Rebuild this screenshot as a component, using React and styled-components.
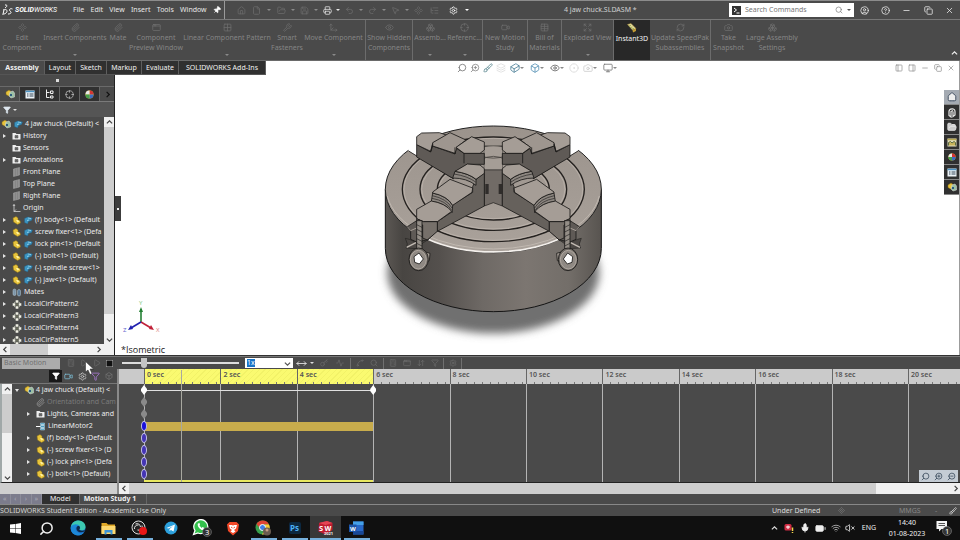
import React from "react"
import styled, { createGlobalStyle, css } from "styled-components"
import {
  Home, File, FolderOpen, Save, Printer, Undo2, Redo2, MousePointer2, Settings, ListTree, Search,
  CircleUser, CircleHelp, Minus, Copy, X, Pin, Component, Paperclip, AppWindow, Grid2x2, Wrench,
  Move3d, Eye, Boxes, Crosshair, Video, Table, Expand, RefreshCw, Camera, Layers, ZoomIn, ZoomOut,
  Brush, Box, Monitor, Calculator, Play, Filter, Mic, BatteryMedium, Wifi, VolumeX,
  PanelLeft, PanelRight, Key, Activity, Spline, MoveHorizontal, ArrowDownUp, Cuboid, CircleDot
} from "lucide-react"

const GlobalStyle = createGlobalStyle`
  * { box-sizing: border-box; }
  body {
    margin: 0;
    background: #4a4a4a;
    color: #e8e8e8;
    font-family: "Noto Sans", "Open Sans", sans-serif;
    font-size: 7px;
    line-height: 10px;
    overflow: hidden;
  }
  button, input, select {
    margin: 0;
    padding: 0;
    border: 0;
    background: none;
    color: inherit;
    font: inherit;
  }
  svg { display: block; flex: none; }
  ul { list-style: none; margin: 0; padding: 0; }
`

const Page = styled.div`
  display: flex;
  flex-direction: column;
  height: 100vh;
`

/* title bar */

const TitleBar = styled.header`
  display: flex;
  align-items: center;
  height: 20px;
  flex: none;
  border-top: 1px solid #8c8c8c;
  border-bottom: 1px solid #787878;
`

const Brand = styled.div`
  display: flex;
  align-items: center;
  gap: 2px;
  width: 70px;
  padding-left: 2px;
  font-family: Roboto, sans-serif;
  font-size: 7px;
  font-style: italic;
  color: #fff;
`

const Menu = styled.nav`
  display: flex;
  align-items: center;
  justify-content: space-between;
  width: 155px;
  height: 18px;
  padding: 0 3px;
  border-right: 1px solid #9a9a9a;
`

const QuickTools = styled.div`
  display: flex;
  align-items: center;
  width: 254px;
  padding-left: 10px;
`

const IconButton = styled.button`
  display: flex;
  align-items: center;
  justify-content: center;
  width: ${p => p.$w || 13}px;
  height: 12px;
  flex: none;
  color: ${p => p.$color || "#6c6c6c"};
  background: ${p => p.$bg || "none"};
`

const DocTitle = styled.h1`
  flex: 1;
  margin: 0;
  padding-left: 85px;
  font-size: 7px;
  font-weight: 400;
  color: #d0d0d0;
  white-space: nowrap;
`

const SearchBox = styled.label`
  display: flex;
  align-items: center;
  gap: 4px;
  width: 125px;
  height: 14px;
  padding: 0 3px;
  background: #fff;
  color: #777;
  & input { flex: 1; min-width: 0; }
  & input::placeholder { color: #777; opacity: 1; }
`

const WindowButtons = styled.div`
  display: flex;
  justify-content: space-around;
  width: 106px;
`

/* ribbon */

const Ribbon = styled.div`
  display: flex;
  height: 41px;
  flex: none;
  border-bottom: 1px solid #6a6a6a;
`

const RibbonButton = styled.button`
  display: flex;
  flex-direction: column;
  align-items: center;
  width: ${p => p.$w}px;
  flex: none;
  padding-top: 3px;
  line-height: 10px;
  color: #858585;
  white-space: nowrap;
  & svg { margin-bottom: 1px; color: #6e6e6e; }
  ${p => p.$sep && css`border-right: 1px solid #6c6c6c;`}
  ${p => p.$on && css`
    background: #282828;
    color: #f4f4f4;
  `}
`

const Caret = styled.i`
  width: 0;
  height: 0;
  border: 2px solid transparent;
  border-top-color: ${p => p.$color || "#8a8a8a"};
  border-bottom: 0;
`

const Collapse = styled.button`
  margin: auto 2px 3px auto;
  color: #eee;
`

/* work area */

const Work = styled.main`
  display: flex;
  flex-direction: column;
  flex: 1;
  min-height: 0;
  background: #fff;
  border-right: 1px solid #9c9c9c;
`

const TopRow = styled.div`
  display: flex;
  height: 14px;
  flex: none;
`

const Tab = styled.button`
  width: ${p => p.$w}px;
  background: ${p => (p.$on ? "#4a4a4a" : "#303030")};
  font-weight: ${p => (p.$on ? 700 : 400)};
  color: #f0f0f0;
  border-right: 1px solid #5e5e5e;
  border-bottom: 1px solid #555;
  white-space: nowrap;
`

const ViewTools = styled.div`
  display: flex;
  align-items: center;
  margin-left: 189px;
`

const ViewControls = styled.div`
  display: flex;
  align-items: center;
  margin-left: auto;
  padding-right: 2px;
`

const WorkRow = styled.div`
  display: flex;
  flex: 1;
  min-height: 0;
`

const Side = styled.aside`
  display: flex;
  flex-direction: column;
  width: 115px;
  flex: none;
  background: #4a4a4a;
  border-right: 1px solid #222;
`

const Grip = styled.div`
  display: flex;
  align-items: center;
  justify-content: center;
  height: 12px;
  border-bottom: 1px solid #6a6a6a;
  &::after {
    content: "";
    width: 3px;
    height: 3px;
    background: #ddd;
  }
`

const SideTabs = styled.div`
  display: flex;
  height: 15px;
  border-bottom: 1px solid #7a7a7a;
  & button {
    width: 20px;
    height: 14px;
    background: #303030;
    border-right: 1px solid #666;
  }
  & button:first-child { background: #4a4a4a; }
  & button:last-child { background: none; border: 0; width: 14px; }
`

const FilterRow = styled.div`
  display: flex;
  align-items: center;
  gap: 2px;
  height: 15px;
  padding-left: 3px;
  background: #555;
`

const TreeArea = styled.div`
  display: flex;
  flex: 1;
  min-height: 0;
`

const Tree = styled.ul`
  flex: 1;
  min-width: 0;
  padding-top: 1px;
  overflow: hidden;
`

const MotionRows = styled(Tree)`
  padding-top: 0;
`

const TreeRow = styled.li`
  display: flex;
  align-items: center;
  gap: 2px;
  height: 12px;
  padding-left: ${p => p.$indent || 0}px;
  color: ${p => (p.$dim ? "#7a7a7a" : "#ececec")};
  white-space: nowrap;
`

const Twist = styled.i`
  width: 10px;
  flex: none;
  &::before {
    content: "";
    display: ${p => (p.$show ? "block" : "none")};
    width: 0;
    margin-left: 3px;
    border: 2px solid transparent;
    border-left: 3px solid #e4e4e4;
    border-right: 0;
  }
  ${p => p.$open && css`&::before { border: 2px solid transparent; border-top: 3px solid #e4e4e4; border-bottom: 0; }`}
`

const Bar = styled.div`
  display: flex;
  flex-direction: ${p => (p.$vertical ? "column" : "row")};
  ${p => (p.$vertical ? "width: 10px;" : "height: 11px;")}
  flex: none;
  background: #f0f0f0;
  color: #444;
`

const BarButton = styled.button`
  display: flex;
  align-items: center;
  justify-content: center;
  width: 10px;
  height: 10px;
  flex: none;
`

const Thumb = styled.div`
  flex: ${p => p.$size};
  background: #cdcdcd;
`

const Rest = styled.div`
  flex: ${p => p.$size};
`

const Canvas = styled.section`
  position: relative;
  flex: 1;
  min-width: 0;
  overflow: hidden;
  & > svg { position: absolute; }
`

const Chuck = styled.svg`
  left: 255px;
  top: 35px;
`

const Triad = styled.svg`
  left: 5px;
  bottom: 20px;
`

const ViewName = styled.span`
  position: absolute;
  left: 6px;
  bottom: 0;
  font-family: "Open Sans", sans-serif;
  font-size: 9px;
  color: #222;
`

const PanelHandle = styled.button`
  position: absolute;
  left: 0;
  top: 121px;
  width: 6px;
  height: 25px;
  background: #3c3c3c;
  &::after {
    content: "";
    display: block;
    width: 2px;
    height: 2px;
    margin: auto;
    background: #eee;
  }
`

const TaskPane = styled.nav`
  position: absolute;
  right: 0;
  top: 15px;
  display: flex;
  flex-direction: column;
  & button {
    width: 15px;
    height: 15px;
    background: #303030;
    border-bottom: 1px solid #888;
  }
  & button:first-child { background: #a4aab2; }
`

/* motion study */

const Motion = styled.section`
  display: grid;
  grid-template-columns: 117px 1fr;
  column-gap: 2px;
  flex: none;
  background: #8a8a8a;
  border-top: 1px solid #333;
`

const MotionTools = styled.div`
  grid-column: 1 / -1;
  display: flex;
  align-items: center;
  height: 13px;
  background: #4a4a4a;
  border-top: 1px solid #777;
`

const StudyType = styled.select`
  appearance: none;
  width: 58px;
  height: 11px;
  margin: 0 4px 0 2px;
  padding-left: 2px;
  background: #ababab;
  color: #707070;
`

const TimeSlider = styled.input`
  appearance: none;
  width: 117px;
  height: 10px;
  margin-left: 6px;
  background: linear-gradient(#ddd, #ddd) center / 100% 2px no-repeat;
  &::-webkit-slider-thumb {
    appearance: none;
    width: 6px;
    height: 10px;
    background: #c4c4c4;
    border-radius: 0 0 3px 3px;
  }
`

const SpeedBox = styled.div`
  display: flex;
  align-items: center;
  justify-content: space-between;
  width: 48px;
  height: 10px;
  margin: 0 2px 0 6px;
  padding: 0 2px;
  background: #fff;
  color: #555;
  & input {
    width: 8px;
    height: 8px;
    background: #1874c8;
    color: #fff;
  }
`

const Divider = styled.i`
  width: 1px;
  height: 11px;
  margin: 0 2px;
  background: #707070;
`

const MotionFilters = styled.div`
  display: flex;
  align-items: center;
  height: 15px;
  padding-left: 49px;
  background: #4a4a4a;
  border-bottom: 1px solid #777;
`

const timeColumns = css`
  display: grid;
  grid-template-columns: 25px repeat(10, 1fr) 52px;
`

const Ruler = styled.div`
  ${timeColumns}
  height: 15px;
  background: #c9c9c9;
  color: #555;
`

const RulerCell = styled.div`
  padding-left: 2px;
  line-height: 12px;
  font-weight: 600;
  white-space: nowrap;
  border-left: ${p => (p.$blank ? 0 : "1px solid #666")};
  background:
    repeating-linear-gradient(90deg, transparent 0 7px, #777 7px 8px) bottom / 100% ${p => (p.$blank ? 0 : 2)}px no-repeat,
    ${p => (p.$on ? "repeating-linear-gradient(135deg, #fafa70 0 3px, #f2f268 3px 4px)" : "#cacaca")};
`

const MotionTree = styled.div`
  display: flex;
  height: 99px;
  background: #4a4a4a;
  border-left: 2px solid #a0a8a8;
  border-bottom: 1px solid #222;
  overflow: hidden;
`

const Lanes = styled.div`
  ${timeColumns}
  position: relative;
  grid-template-rows: repeat(8, 12px) 2px;
  height: 99px;
  background: #4a4a4a;
  border-bottom: 1px solid #222;
`

const GridLine = styled.i`
  grid-row: 1 / -1;
  grid-column: ${p => p.$col};
  border-left: 1px solid #b4b4b4;
`

const Span = styled.i`
  grid-row: ${p => p.$row};
  grid-column: 2 / 5;
  align-self: center;
  height: ${p => (p.$thin ? 1 : 9)}px;
  background: ${p => (p.$thin ? "#e0e0e0" : "#c8ac4c")};
`

const KeyPoint = styled.i`
  grid-row: ${p => p.$row};
  grid-column: ${p => p.$col || 2};
  align-self: center;
  width: 6px;
  height: 10px;
  margin-left: -3px;
  z-index: 1;
  background: ${p => p.$color};
  ${p => p.$round
    ? "border: 1px solid #c4c0e4; border-radius: 50%;"
    : "clip-path: polygon(50% 0, 100% 40%, 100% 60%, 50% 100%, 0 60%, 0 40%);"}
`

const EndLine = styled.i`
  grid-column: 2 / 5;
  grid-row: 9;
  height: 2px;
  background: #e8e860;
`

const Playhead = styled.i`
  position: absolute;
  left: 62px;
  top: -14px;
  bottom: 0;
  border-left: 1px solid #a8a8a0;
`

const ZoomTools = styled.div`
  position: absolute;
  right: 2px;
  bottom: 0;
  display: flex;
  background: #c4ccd4;
`

const Blank = styled.div`
  background: #cfcfcf;
`

const Cursor = styled.svg`
  position: absolute;
  left: 85px;
  top: 361px;
`

const StudyTabs = styled.div`
  display: flex;
  height: 11px;
  flex: none;
  border-bottom: 1px solid #888;
`

const PageButtons = styled.div`
  display: flex;
  width: 42px;
  background: #7c7c8c;
  color: #a8a8b4;
  & button { flex: 1; border-right: 1px solid #8c8c9a; }
`

const StudyTab = styled.button`
  padding: 0 8px;
  font-weight: ${p => (p.$on ? 700 : 400)};
  background: ${p => (p.$on ? "#4a4a4a" : "#303030")};
  color: #f0f0f0;
  border-right: 1px solid #666;
  ${p => p.$on && "padding: 0 10px 0 4px;"}
`

const Status = styled.footer`
  display: flex;
  align-items: center;
  height: 11px;
  flex: none;
  color: #d4d4d4;
  & span:first-child { flex: 1; }
`

const StatusCell = styled.span`
  width: ${p => p.$w}px;
  color: ${p => (p.$dim ? "#868686" : "#dedede")};
`

/* windows taskbar */

const Taskbar = styled.nav`
  display: flex;
  align-items: center;
  height: 24px;
  flex: none;
  background: #101010;
  color: #f0f0f0;
`

const TaskButton = styled.button`
  display: flex;
  align-items: center;
  justify-content: center;
  width: 31px;
  height: 24px;
  background: ${p => (p.$on ? "#383838" : "none")};
  ${p => p.$open && css`
    background-image: linear-gradient(#76b0dc, #76b0dc);
    background-position: bottom;
    background-size: ${p.$on ? "100%" : "26px"} 2px;
    background-repeat: no-repeat;
  `}
`

const Tray = styled.div`
  display: flex;
  align-items: center;
  margin-left: auto;
`

const Clock = styled.time`
  width: 52px;
  text-align: center;
  line-height: 11px;
`

const NotifyButton = styled(IconButton)`
  height: 20px;
  margin-right: 5px;
`

/* icons */

const SearchLeft = styled(Search)`transform: scaleX(-1);`
const ZoomInLeft = styled(ZoomIn)`transform: scaleX(-1);`
const ZoomOutLeft = styled(ZoomOut)`transform: scaleX(-1);`
const PinTilted = styled(Pin)`transform: rotate(45deg);`

const Logo = () => (
  <svg width="11" height="12" viewBox="0 0 22 24" fill="none" stroke="#fff" strokeWidth="2">
    <path d="M6 2 C11 1 11 5 6 8 M2 12 C10 9 12 14 8 18 C6 20 3 20 1 21 M4 12 L2 20 M21 10 C17 8 13 11 16 14 C20 17 18 20 12 20" />
  </svg>
)

const InstantGlyph = () => (
  <svg width="12" height="10" viewBox="0 0 24 20">
    <path d="M3 3 L10 1 L20 11 L13 14 Z" fill="#e8dc9c" stroke="#a88c34" />
    <path d="M6 6 L10 5 M9 9 L13 8 M12 12 L16 11" stroke="#7c9c44" strokeWidth="1.5" />
    <path d="M13 14 L20 11 V16 L14 19 Z" fill="#c49c34" />
  </svg>
)

const Part = ({ size = 9 }) => (
  <svg width={size} height={size} viewBox="0 0 18 18">
    <path d="M2 4 L8 1 L12 4 V8 L16 9 L17 14 L11 17 L3 12 Z" fill="#e8c43c" stroke="#8a6e14" />
    <path d="M8 8 L12 8 L15 11 L11 13 Z" fill="#fff2a0" />
  </svg>
)

const Assembly = () => (
  <svg width="10" height="10" viewBox="0 0 20 20">
    <path d="M2 6 L8 2 L12 5 V11 L7 14 L2 11 Z" fill="#e8c43c" stroke="#8a6e14" />
    <path d="M10 6 L16 4 L19 8 V16 L12 18 L8 14 Z" fill="#9cc0a4" stroke="#dcdcdc" />
    <path d="M10 10 h4 v4 h-4 z" fill="#2c5c80" />
  </svg>
)

const Fixed = () => (
  <svg width="10" height="9" viewBox="0 0 20 18">
    <path d="M3 5 L9 2 L19 4 L17 9 L11 11 L9 16 L3 13 Z" fill="#3c94c0" stroke="#245c80" />
    <path d="M10 4 L16 5 M8 9 L12 8" stroke="#a4dcf0" strokeWidth="1.5" />
  </svg>
)

const FolderGlyph = () => (
  <svg width="9" height="8" viewBox="0 0 18 16">
    <path d="M1 2 h6 l2 2 h8 v11 H1 Z" fill="#eee" />
    <path d="M6 7 h6 v5 h-6 z M8 9 h2" fill="#777" stroke="#444" />
  </svg>
)

const PlaneGlyph = () => (
  <svg width="9" height="10" viewBox="0 0 18 20">
    <path d="M3 4 L15 1 V16 L3 19 Z" fill="#909090" stroke="#a8a8a8" />
    <path d="M7 3 V18 M11 2 V17" stroke="#7a7a7a" />
  </svg>
)

const OriginGlyph = () => (
  <svg width="9" height="9" viewBox="0 0 18 18" fill="none" stroke="#ddd" strokeWidth="1.5">
    <path d="M4 1 V15 H17 M2 4 L4 1 L6 4 M4 15 L8 11" />
  </svg>
)

const MatesGlyph = () => (
  <svg width="10" height="9" viewBox="0 0 20 18">
    <rect x="2" y="2" width="6" height="13" rx="3" fill="#7d95a8" stroke="#b8ccd8" />
    <rect x="11" y="3" width="6" height="13" rx="3" fill="#5c7c98" stroke="#b8ccd8" />
  </svg>
)

const PatternGlyph = () => (
  <svg width="10" height="9" viewBox="0 0 20 18">
    <circle cx="10" cy="9" r="6" fill="#666a58" stroke="#dfe4cc" strokeWidth="2" />
    <path d="M7 0 h6 v6 h-6z M7 12 h6 v6 h-6z M1 6 h6 v6 h-6z M13 6 h6 v6 h-6z" fill="#f0f0e4" stroke="#555" />
  </svg>
)

const MotorGlyph = () => (
  <svg width="10" height="9" viewBox="0 0 20 18">
    <path d="M9 2 h8 v14 h-8 z" fill="#4c9cc0" stroke="#bde" />
    <path d="M0 9 H9 M10 6 h6 M10 12 h6" stroke="#fff" strokeWidth="2" />
  </svg>
)

const LinkGlyph = () => <Paperclip size={9} color="#9a9a9a" />

const BallGlyph = ({ size = 9 }) => (
  <svg width={size} height={size} viewBox="0 0 18 18">
    <circle cx="9" cy="9" r="8" fill="#e8c43c" />
    <path d="M9 9 V1 A8 8 0 0 1 17 9 Z" fill="#d43434" />
    <path d="M9 9 H17 A8 8 0 0 1 9 17 Z" fill="#3c6cc4" />
    <path d="M9 9 H1 A8 8 0 0 1 9 1 Z" fill="#e8e8e8" />
    <path d="M9 9 V17 A8 8 0 0 1 1 9 Z" fill="#44a04c" />
  </svg>
)

const ListGlyph = () => (
  <svg width="10" height="9" viewBox="0 0 20 18">
    <rect x="1" y="1" width="18" height="16" fill="#eef4f8" />
    <path d="M1 3 h18" stroke="#4c94c4" strokeWidth="3" />
    <path d="M4 8 h3 M9 8 h8 M4 12 h3 M9 12 h8" stroke="#345" strokeWidth="2" />
  </svg>
)

const PaletteGlyph = () => (
  <svg width="10" height="9" viewBox="0 0 20 18">
    <rect x="1" y="1" width="18" height="16" fill="#e4e0c0" />
    <path d="M1 3 h18" stroke="#b8a850" strokeWidth="3" />
    <path d="M3 15 V9 L7 7 L10 10 L14 7 L17 9 V15" fill="#c8b45c" stroke="#5c6c44" strokeWidth="2" />
  </svg>
)

const ResourceGlyph = () => (
  <svg width="10" height="11" viewBox="0 0 20 22">
    <path d="M4 9 C4 3 16 1 16 9 V16 L12 19 V9 M4 9 V17 L8 20 V9 L12 7" fill="none" stroke="#e8e8e8" strokeWidth="2.4" />
  </svg>
)

const ConfigGlyph = () => (
  <svg width="9" height="10" viewBox="0 0 18 20" fill="none" stroke="#eee" strokeWidth="2">
    <path d="M3 1 V17 H9 M3 7 H9 M11 4 h5 v5 h-5z M11 14 h5 v4 h-5z" />
  </svg>
)

const Chevron = ({ dir }) => {
  const d = { up: "M1 5 L4 2 L7 5", down: "M1 3 L4 6 L7 3", left: "M5 1 L2 4 L5 7", right: "M3 1 L6 4 L3 7" }
  return (
    <svg width="7" height="7" viewBox="0 0 8 8" fill="none" stroke="currentColor" strokeWidth="1.4">
      <path d={d[dir]} />
    </svg>
  )
}

const WindowsLogo = () => (
  <svg width="11" height="11" viewBox="0 0 22 22" fill="#fff">
    <path d="M0 3 L10 2 V10 H0 Z M11 2 L22 0 V10 H11 Z M0 11 H10 V20 L0 19 Z M11 11 H22 V22 L11 20 Z" />
  </svg>
)

const EdgeLogo = () => (
  <svg width="16" height="16" viewBox="0 0 32 32">
    <circle cx="16" cy="16" r="15" fill="#1c74cc" />
    <path d="M2 13 C4 4 12 1 17 1 C27 1 32 9 31 15 C30 21 23 22 19 20 C22 17 20 11 14 11 C8 11 4 13 2 19 Z" fill="#3cc8b0" />
    <path d="M2 13 C8 6 17 8 20 13 C14 10 9 15 12 21 C15 27 22 28 27 26 C22 32 12 32 6 27 C2 23 1 18 2 13 Z" fill="#1c88d8" />
    <path d="M19 20 C17 19 20 18 20 15 C19 11 14 11 13 16 C12 22 19 27 29 23 C30 22 31 21 31 20 C27 22 22 22 19 20 Z" fill="#0d2848" />
  </svg>
)

const ExplorerLogo = () => (
  <svg width="15" height="13" viewBox="0 0 30 26">
    <path d="M1 2 H11 L14 5 H28 V23 H1 Z" fill="#e0a828" />
    <path d="M1 8 H29 V24 H1 Z" fill="#fcd870" />
    <path d="M7 16 H23 V25 H19 V21 H11 V25 H7 Z" fill="#3c94d8" />
  </svg>
)

const ObsLogo = () => (
  <svg width="17" height="16" viewBox="0 0 34 32">
    <circle cx="15" cy="15" r="13" fill="#222" stroke="#ddd" strokeWidth="2" />
    <path d="M9 8 A7 7 0 0 1 19 14 M22 11 A7 7 0 0 1 13 20 M7 18 A7 7 0 0 1 15 10" stroke="#ddd" strokeWidth="2" fill="none" />
    <circle cx="24" cy="22" r="8" fill="#e81818" />
  </svg>
)

const TelegramLogo = () => (
  <svg width="14" height="14" viewBox="0 0 28 28">
    <circle cx="14" cy="14" r="13" fill="#2ca0dc" />
    <path d="M5 14 L22 7 L19 21 L14 18 L11 20 L11 16 L18 10 L9 15 Z" fill="#fff" />
  </svg>
)

const WhatsappLogo = () => (
  <svg width="20" height="18" viewBox="0 0 40 36">
    <path d="M3 31 L6 23 A14 14 0 1 1 12 28 Z" fill="#34c04c" stroke="#fff" strokeWidth="2.5" />
    <path d="M12 9 C9 13 17 24 23 22 L25 18 L21 16 L19 18 L15 13 L16 11 L15 8 Z" fill="#fff" />
    <circle cx="30" cy="26" r="9" fill="#333" stroke="#888" />
    <text x="26" y="32" fontSize="15" fill="#fff">3</text>
  </svg>
)

const BraveLogo = () => (
  <svg width="14" height="15" viewBox="0 0 28 30">
    <path d="M7 2 H21 L26 7 L24 20 L14 29 L4 20 L2 7 Z" fill="#f04828" />
    <path d="M6 8 L11 8 L14 9 L17 8 L22 8 L20 15 L16 18 L19 21 L14 24 L9 21 L12 18 L8 15 Z" fill="#fff" />
    <path d="M10 12 l3 2 M18 12 l-3 2" stroke="#f04828" strokeWidth="2" />
  </svg>
)

const ChromeLogo = () => (
  <svg width="17" height="16" viewBox="0 0 34 32">
    <circle cx="15" cy="15" r="14" fill="#38a04c" />
    <path d="M3 8 A14 14 0 0 1 28 9 H15 L10 17 Z" fill="#e04434" />
    <path d="M28 9 A14 14 0 0 1 14 29 L21 16 L19 9 Z" fill="#f8cc34" />
    <circle cx="15" cy="15" r="6" fill="#4080e8" stroke="#fff" strokeWidth="2" />
    <circle cx="24" cy="23" r="8" fill="#6a5c50" />
    <circle cx="24" cy="20" r="3" fill="#c8a084" />
  </svg>
)

const Tile = styled.span`
  width: 12px;
  height: 12px;
  line-height: 12px;
  border-radius: 2px;
  background: ${p => p.$bg};
  color: ${p => p.$color};
  font-size: 8px;
  font-weight: 700;
`

const WordLogo = () => (
  <svg width="15" height="14" viewBox="0 0 30 28">
    <path d="M8 1 H29 V27 H8 Z" fill="#2868c8" />
    <path d="M8 1 H29 V8 H8 Z" fill="#44a0e8" />
    <path d="M8 20 H29 V27 H8 Z" fill="#184898" />
    <rect x="0" y="7" width="15" height="15" fill="#1c54a8" />
    <text x="2" y="19" fontSize="12" fontWeight="700" fill="#fff">W</text>
  </svg>
)

const SolidLogo = () => (
  <svg width="17" height="16" viewBox="0 0 34 32">
    <path d="M4 6 L20 2 L31 6 V20 L17 29 L3 23 Z" fill="#c01c30" />
    <path d="M4 6 L20 2 L31 6 L17 10 Z" fill="#e44454" />
    <text x="4" y="22" fontSize="15" fontWeight="700" fill="#fff">S</text>
    <text x="15" y="21" fontSize="14" fontWeight="700" fill="#fff">W</text>
    <text x="14" y="30" fontSize="8" fontWeight="700" fill="#eee">2021</text>
  </svg>
)

const NotifyGlyph = () => (
  <svg width="18" height="18" viewBox="0 0 36 36">
    <path d="M3 4 H24 V20 H13 L8 25 V20 H3 Z" fill="#f4f4f4" />
    <path d="M7 9 h13 M7 13 h13" stroke="#555" strokeWidth="2" />
    <circle cx="24" cy="24" r="9" fill="#333" stroke="#999" />
    <text x="20" y="30" fontSize="15" fill="#fff">1</text>
  </svg>
)

/* the four jaw chuck model */

const Jaws = () => (
  <g stroke="#191817" strokeWidth="2.5" strokeLinejoin="round">
    <path d="M112 108 L116 123 L142 138 L142 96 Z" fill="#fff" stroke="none" />
    <path d="M116 123 L250 206" />
    <path d="M140 104 L182 126 L188 108 L255 132 L258 114 L282 130 L343 130 L343 163 L292 163 L256 184 L250 206 L140 141 Z" fill="#5f5a56" />
    <path d="M140 80 L155 69 L208 68 L232 76 L188 100 L182 124 L140 104 Z" fill="#a59d96" />
    <path d="M188 98 L240 68 L288 90 L262 110 L255 130 L188 108 Z" fill="#9e968f" />
    <path d="M258 112 L305 80 L343 96 L343 120 L330 130 L282 130 Z" fill="#a59d96" />
    <path d="M182 124 L188 103 M255 132 V112 M282 130 V160" fill="none" />
    <path d="M112 350 L140 332 L202 335 L202 362 L172 390 L140 396 L122 388 L122 362 Z" fill="#5f5a56" />
    <path d="M112 350 L122 362 L140 354" fill="none" stroke="#b4aca4" />
    <path d="M318 208 L343 188 V288 L202 364 V335 L245 306 V286 L308 247 V230 Z" fill="#66615c" />
    <path d="M255 184 Q296 190 318 208 V226 Q290 204 248 204 Z" fill="#8c8680" />
    <path d="M252 192 Q292 198 317 216" fill="none" strokeWidth="1.8" />
    <path d="M255 184 L292 162 L330 165 L343 176 V190 L318 208 Q296 190 255 184 Z" fill="#a59d96" />
    <path d="M188 249 Q232 258 248 286 L246 308 Q226 278 184 274 Z" fill="#8c8680" />
    <path d="M187 257 Q230 266 246 294 M186 265 Q228 272 244 300" fill="none" strokeWidth="1.8" />
    <path d="M188 246 L240 208 L308 234 L306 247 L248 286 Q232 258 188 249 Z" fill="#a59d96" />
    <path d="M140 298 L184 273 Q226 280 245 304 L202 335 L160 335 L140 326 Z" fill="#a59d96" />
    <path d="M140 326 L160 335 L202 335 V364 L172 390 L158 384 V345 L140 338 Z" fill="#76706a" />
    <path d="M106 385 L118 388 L140 398 L176 388 L160 398 L142 416 L108 414 L112 402 Z" fill="#4c4845" strokeWidth="1.5" />
    <path d="M110 412 L138 398" stroke="#c4bcb4" strokeWidth="4" />
    <path d="M140 332 H156 V418 H140 Z" fill="#948e87" />
    <path d="M140 344 l16 8 M140 358 l16 8 M140 372 l16 8 M140 386 l16 8 M140 400 l16 8" strokeWidth="1.8" />
    <path d="M166 426 L180 430 L178 452 L166 456 Z" fill="#aaa29a" />
    <ellipse cx="146" cy="448" rx="29" ry="34" fill="#6c6762" />
    <ellipse cx="145" cy="449" rx="24" ry="28" fill="#8f8983" stroke="#bab2aa" />
    <path d="M132 440 L147 429 L160 447 L148 462 L134 457 Z" fill="#fff" />
  </g>
)

const ChuckModel = () => (
  <Chuck width="250" height="240" viewBox="0 0 750 720" role="img" aria-label="4 jaw chuck">
    <defs>
      <linearGradient id="wall">
        <stop offset="0" stopColor="#5c5854" />
        <stop offset="0.08" stopColor="#484542" />
        <stop offset="0.25" stopColor="#54504d" />
        <stop offset="0.45" stopColor="#6e6965" />
        <stop offset="0.65" stopColor="#7c7671" />
        <stop offset="0.85" stopColor="#736e69" />
        <stop offset="1" stopColor="#585450" />
      </linearGradient>
      <linearGradient id="face" x2="0" y2="1">
        <stop offset="0" stopColor="#9b938c" />
        <stop offset="1" stopColor="#aaa29b" />
      </linearGradient>
      <filter id="soft" x="-20%" y="-20%" width="140%" height="140%">
        <feGaussianBlur stdDeviation="13" />
      </filter>
    </defs>
    <ellipse cx="370" cy="488" rx="318" ry="182" fill="#707070" filter="url(#soft)" />
    <path d="M46 238 V415 A324 190 0 0 0 694 415 V238 Z" fill="url(#wall)" stroke="#141414" strokeWidth="3" />
    <ellipse cx="370" cy="238" rx="324" ry="190" fill="url(#face)" stroke="#222" strokeWidth="3" />
    <path d="M52 258 A321 184 0 0 0 688 258" fill="none" stroke="#c0b8b0" strokeWidth="3" />
    <path d="M170 386 A325 188 0 0 0 570 386" fill="none" stroke="#f4f0ec" strokeWidth="5" />
    <g fill="none" stroke="#24211f">
      <ellipse cx="370" cy="238" rx="273" ry="157" strokeWidth="4" />
      <ellipse cx="370" cy="238" rx="268" ry="153" strokeWidth="2" stroke="#c2bab2" />
      <ellipse cx="370" cy="238" rx="220" ry="123" strokeWidth="4" />
      <ellipse cx="370" cy="238" rx="215" ry="119" strokeWidth="2" stroke="#c2bab2" />
      <ellipse cx="370" cy="238" rx="168" ry="92" strokeWidth="4" />
      <ellipse cx="370" cy="238" rx="163" ry="88" strokeWidth="2" stroke="#c2bab2" />
    </g>
    <path d="M343 108 H397 V288 L370 278 L343 288 Z" fill="#716b66" stroke="#191817" strokeWidth="2" />
    <path d="M343 112 Q370 106 397 112 V178 H343 Z" fill="#a59d96" />
    <path d="M330 137 Q370 152 410 137 M330 150 Q370 128 410 150 M343 180 H397" fill="none" stroke="#34302e" strokeWidth="2" />
    <Jaws />
    <g transform="translate(740 0) scale(-1 1)"><Jaws /></g>
    <path d="M346 222 h10 v30 h-10 z M386 222 h10 v30 h-10 z" fill="#2f2c2a" />
  </Chuck>
)

const quick = [
  [Home, 13], [File, 17, 1], [FolderOpen, 16, 1], [Save, 15, 1], [Printer, 14, 1, "#e8e8e8"],
  [Undo2, 15, 1], [Redo2, 15, 1], [MousePointer2, 15, 1], [Component, 14], [ListTree, 18], [Settings, 20, 1, "#fff"]
]

const ribbon = [
  { text: ["Edit", "Component"], w: 44, icon: Component },
  { text: ["Insert Components", ""], w: 62, icon: Paperclip, more: true },
  { text: ["Mate"], w: 24, icon: Paperclip },
  { text: ["Component", "Preview Window"], w: 52, icon: AppWindow },
  { text: ["Linear Component Pattern", ""], w: 90, icon: Grid2x2, more: true },
  { text: ["Smart", "Fasteners"], w: 30, icon: Wrench },
  { text: ["Move Component", ""], w: 64, icon: Move3d, more: true, sep: true },
  { text: ["Show Hidden", "Components"], w: 47, icon: Eye, sep: true },
  { text: ["Assemb...", ""], w: 34, icon: Boxes, more: true },
  { text: ["Referenc...", ""], w: 36, icon: Crosshair, more: true, sep: true },
  { text: ["New Motion", "Study"], w: 45, icon: Video, sep: true },
  { text: ["Bill of", "Materials"], w: 34, icon: Table, sep: true },
  { text: ["Exploded View", ""], w: 52, icon: Expand, more: true, sep: true },
  { text: ["Instant3D"], w: 36, icon: InstantGlyph, on: true },
  { text: ["Update SpeedPak", "Subassemblies"], w: 61, icon: RefreshCw, sep: true },
  { text: ["Take", "Snapshot"], w: 35, icon: Camera },
  { text: ["Large Assembly", "Settings"], w: 52, icon: Boxes }
]

const tabs = [["Assembly", 45], ["Layout", 31], ["Sketch", 31], ["Markup", 35], ["Evaluate", 37], ["SOLIDWORKS Add-Ins", 87]]

const viewTools = [
  [SearchLeft, 13, "#777"], [ZoomInLeft, 13, "#888"], [Brush, 13, "#5c8890"], [Layers, 13, "#ddd"],
  [Cuboid, 20, "#4c8098", 1], [Box, 20, "#5490b4", 1], [Eye, 20, "#666", 1], [CircleDot, 13, "#d8d8d8"],
  [Camera, 20, "#ccc", 1], [Monitor, 20, "#777", 1]
]

const tree = [
  { text: "History", icon: FolderGlyph, more: true },
  { text: "Sensors", icon: FolderGlyph },
  { text: "Annotations", icon: FolderGlyph, more: true },
  { text: "Front Plane", icon: PlaneGlyph },
  { text: "Top Plane", icon: PlaneGlyph },
  { text: "Right Plane", icon: PlaneGlyph },
  { text: "Origin", icon: OriginGlyph },
  { text: "(f) body<1> (Default", icon: Part, part: true, more: true },
  { text: "screw fixer<1> (Defa", icon: Part, part: true, more: true },
  { text: "lock pin<1> (Default", icon: Part, part: true, more: true },
  { text: "(-) bolt<1> (Default)", icon: Part, part: true, more: true },
  { text: "(-) spindle screw<1>", icon: Part, part: true, more: true },
  { text: "(-) jaw<1> (Default)", icon: Part, part: true, more: true },
  { text: "Mates", icon: MatesGlyph, more: true },
  { text: "LocalCirPattern2", icon: PatternGlyph, more: true },
  { text: "LocalCirPattern3", icon: PatternGlyph, more: true },
  { text: "LocalCirPattern4", icon: PatternGlyph, more: true },
  { text: "LocalCirPattern5", icon: PatternGlyph, more: true }
]

const motionTree = [
  { text: "4 jaw chuck (Default) <", icon: Assembly, indent: 0, more: true, open: true },
  { text: "Orientation and Cam", icon: LinkGlyph, indent: 12, dim: true },
  { text: "Lights, Cameras and", icon: FolderGlyph, indent: 12, more: true },
  { text: "LinearMotor2", icon: MotorGlyph, indent: 12 },
  { text: "(f) body<1> (Default", icon: Part, indent: 12, more: true },
  { text: "(-) screw fixer<1> (D", icon: Part, indent: 12, more: true },
  { text: "(-) lock pin<1> (Defa", icon: Part, indent: 12, more: true },
  { text: "(-) bolt<1> (Default)", icon: Part, indent: 12, more: true }
]

const keyColors = ["#fff", "#8a8a8a", "#8a8a8a", "#1c10d8", "#4434b4", "#4434b4", "#4434b4", "#4434b4"]
const seconds = [0, 2, 4, 6, 8, 10, 12, 14, 16, 18, 20]

const motionIcons = [
  [Key, 16], [Activity, 16], "|", [Spline, 14], [Search, 14], "|",
  [Calculator, 14], [AppWindow, 14], [ArrowDownUp, 14], [Filter, 13], "|", [Settings, 13], "|"
]

const apps = [
  { name: "Start", icon: <WindowsLogo /> },
  { name: "Search", icon: <SearchLeft size={15} strokeWidth={2.4} /> },
  { name: "Edge", icon: <EdgeLogo /> },
  { name: "File Explorer", icon: <ExplorerLogo />, open: true },
  { name: "OBS", icon: <ObsLogo />, open: true },
  { name: "Telegram", icon: <TelegramLogo /> },
  { name: "WhatsApp", icon: <WhatsappLogo /> },
  { name: "Brave", icon: <BraveLogo /> },
  { name: "Chrome", icon: <ChromeLogo />, open: true },
  { name: "Photoshop", icon: <Tile $bg="#0c2840" $color="#4cb0f8">Ps</Tile>, open: true },
  { name: "SolidWorks", icon: <SolidLogo />, open: true, on: true },
  { name: "Word", icon: <WordLogo />, open: true }
]

const TitleArea = () => (
  <TitleBar>
    <Brand><Logo /><span><b>SOLID</b>WORKS</span></Brand>
    <Menu>
      {["File", "Edit", "View", "Insert", "Tools", "Window"].map(m => <button key={m}>{m}</button>)}
      <PinTilted size={8} fill="#fff" color="#fff" />
    </Menu>
    <QuickTools>
      {quick.map(([Icon, w, more, color], i) => (
        <React.Fragment key={i}>
          <IconButton $w={w} $color={color}><Icon size={9} /></IconButton>
          {more && <IconButton $w={8}><Caret $color={color} /></IconButton>}
        </React.Fragment>
      ))}
    </QuickTools>
    <DocTitle>4 jaw chuck.SLDASM *</DocTitle>
    <SearchBox>
      <svg width="9" height="9" viewBox="0 0 18 18">
        <rect width="18" height="18" fill="#333" />
        <path d="M4 4 L9 8 L4 12 M9 14 H15" stroke="#fff" strokeWidth="2" fill="none" />
      </svg>
      <input placeholder="Search Commands" aria-label="Search Commands" />
      <Search size={8} />
      <Caret $color="#555" />
    </SearchBox>
    <WindowButtons>
      {[CircleUser, CircleHelp, Minus, Copy, X].map((Icon, i) => (
        <IconButton key={i} $color="#f0f0f0"><Icon size={9} /></IconButton>
      ))}
    </WindowButtons>
  </TitleBar>
)

const FeatureTree = () => (
  <Side>
    <Grip />
    <SideTabs>
      <IconButton><Assembly /></IconButton>
      <IconButton><ListGlyph /></IconButton>
      <IconButton><ConfigGlyph /></IconButton>
      <IconButton $color="#bbb"><Crosshair size={9} /></IconButton>
      <IconButton><BallGlyph /></IconButton>
      <IconButton $color="#111"><Chevron dir="right" /></IconButton>
    </SideTabs>
    <FilterRow><Filter size={8} fill="#dfe8f0" color="#dfe8f0" /><Caret $color="#ddd" /></FilterRow>
    <TreeArea>
      <Tree>
        <TreeRow $indent={1}><Assembly /><Fixed />4 jaw chuck (Default) &lt;</TreeRow>
        {tree.map(({ text, icon: Icon, more, part }) => (
          <TreeRow key={text}><Twist $show={more} /><Icon />{part && <Fixed />}{text}</TreeRow>
        ))}
      </Tree>
      <Bar $vertical>
        <BarButton><Chevron dir="up" /></BarButton>
        <Thumb $size={187} />
        <Rest $size={20} />
        <BarButton><Chevron dir="down" /></BarButton>
      </Bar>
    </TreeArea>
    <Bar>
      <BarButton><Chevron dir="left" /></BarButton>
      <Thumb $size={38} />
      <Rest $size={45} />
      <BarButton><Chevron dir="right" /></BarButton>
      <Rest $size={10} />
    </Bar>
  </Side>
)

const Viewport = () => (
  <Canvas>
    <ChuckModel />
    <Triad width="42" height="36" viewBox="0 0 42 36">
      <g strokeWidth="1.6">
        <path d="M21 23 V10" stroke="#248034" />
        <path d="M21 23 L31 29" stroke="#c02038" />
        <path d="M21 23 L11 29" stroke="#2020b0" />
      </g>
      <path d="M19 13 L21 8 L23 13 Z" fill="#248034" />
      <path d="M29 30 L34 31 L31 26 Z" fill="#c02038" />
      <path d="M13 30 L8 31 L11 26 Z" fill="#2020b0" />
      <text x="19" y="6" fontSize="6" fill="#8c8">Y</text>
      <text x="36" y="33" fontSize="6" fill="#d88">X</text>
      <text x="3" y="33" fontSize="6" fill="#66c">Z</text>
    </Triad>
    <ViewName>*Isometric</ViewName>
    <PanelHandle aria-label="Collapse panel" />
    <TaskPane>
      <IconButton $color="#2c3c50"><Home size={10} fill="#eee" /></IconButton>
      <IconButton><ResourceGlyph /></IconButton>
      <IconButton $color="#eee"><FolderOpen size={10} fill="#ccc" /></IconButton>
      <IconButton><PaletteGlyph /></IconButton>
      <IconButton><BallGlyph size={8} /></IconButton>
      <IconButton><ListGlyph /></IconButton>
      <IconButton><Assembly /></IconButton>
    </TaskPane>
  </Canvas>
)

const MotionStudy = () => (
  <Motion>
    <MotionTools>
      <StudyType aria-label="Study type"><option>Basic Motion</option></StudyType>
      <IconButton><Calculator size={8} /></IconButton>
      <IconButton><Play size={8} /></IconButton>
      <IconButton><Play size={8} /></IconButton>
      <IconButton $color="#111"><svg width="7" height="7"><rect width="7" height="7" fill="#111" stroke="#bbb" /></svg></IconButton>
      <TimeSlider type="range" defaultValue="17" aria-label="Time" />
      <SpeedBox>
        <input defaultValue="1x" aria-label="Playback speed" />
        <Chevron dir="down" />
      </SpeedBox>
      <IconButton $color="#ddd"><MoveHorizontal size={11} /></IconButton>
      <IconButton $w={8}><Caret $color="#ddd" /></IconButton>
      {motionIcons.map((m, i) => {
        if (m === "|") return <Divider key={i} />
        const [Icon, w] = m
        return <IconButton key={i} $w={w}><Icon size={8} /></IconButton>
      })}
    </MotionTools>
    <MotionFilters>
      <IconButton $color="#fff" $bg="#181818"><Filter size={8} fill="#fff" /></IconButton>
      <IconButton $color="#7cbcd4"><Video size={9} /></IconButton>
      <IconButton $w={14} $color="#ccc"><Settings size={9} /></IconButton>
      <IconButton $color="#b07cdc"><Filter size={9} /></IconButton>
      <IconButton $w={14} $color="#777"><Box size={8} /></IconButton>
    </MotionFilters>
    <Ruler>
      <RulerCell $blank />
      {seconds.map(s => <RulerCell key={s} $on={s < 6}>{s} sec</RulerCell>)}
    </Ruler>
    <MotionTree>
      <Bar $vertical>
        <BarButton><Chevron dir="up" /></BarButton>
        <Thumb $size={38} />
        <Rest $size={39} />
        <BarButton><Chevron dir="down" /></BarButton>
      </Bar>
      <MotionRows>
        {motionTree.map(({ text, icon: Icon, indent, more, open, dim }) => (
          <TreeRow key={text} $indent={indent} $dim={dim}><Twist $show={more} $open={open} /><Icon />{text}</TreeRow>
        ))}
      </MotionRows>
    </MotionTree>
    <Lanes>
      {seconds.map((s, i) => <GridLine key={s} $col={i + 2} />)}
      <Span $row={1} $thin />
      <Span $row={4} />
      {keyColors.map((c, i) => <KeyPoint key={i} $row={i + 1} $color={c} $round={i > 2} />)}
      <KeyPoint $row={1} $col={5} $color="#fff" />
      <EndLine />
      <Playhead />
      <ZoomTools>
        {[SearchLeft, ZoomInLeft, ZoomOutLeft].map((Icon, i) => <IconButton key={i} $color="#345"><Icon size={9} /></IconButton>)}
      </ZoomTools>
    </Lanes>
    <Blank />
    <Bar>
      <BarButton><Chevron dir="left" /></BarButton>
      <Thumb $size={745} />
      <Rest $size={74} />
      <BarButton><Chevron dir="right" /></BarButton>
    </Bar>
  </Motion>
)

const App = () => (
  <Page>
    <GlobalStyle />
    <TitleArea />
    <Ribbon>
      {ribbon.map(({ text, w, icon: Icon, more, sep, on }) => (
        <RibbonButton key={text[0]} $w={w} $sep={sep} $on={on}>
          <Icon size={9} />
          <span>{text[0]}</span>
          {text[1] && <span>{text[1]}</span>}
          {more && <Rest $size={3} />}
          {more && <Caret />}
          {more && <Rest $size={1} />}
        </RibbonButton>
      ))}
      <Collapse aria-label="Collapse ribbon"><Chevron dir="up" /></Collapse>
    </Ribbon>
    <Work>
      <TopRow>
        {tabs.map(([name, w], i) => <Tab key={name} $w={w} $on={i === 0}>{name}</Tab>)}
        <ViewTools>
          {viewTools.map(([Icon, w, color, more], i) => (
            <IconButton key={i} $w={w} $color={color}><Icon size={10} />{more && <Caret />}</IconButton>
          ))}
        </ViewTools>
        <ViewControls>
          {[PanelLeft, PanelRight, Minus, Copy, X].map((Icon, i) => (
            <IconButton key={i} $color="#888"><Icon size={8} /></IconButton>
          ))}
        </ViewControls>
      </TopRow>
      <WorkRow>
        <FeatureTree />
        <Viewport />
      </WorkRow>
    </Work>
    <MotionStudy />
    <StudyTabs>
      <PageButtons>
        {["«", "‹", "›", "»"].map(t => <button key={t}>{t}</button>)}
      </PageButtons>
      <StudyTab>Model</StudyTab>
      <StudyTab $on>Motion Study 1</StudyTab>
    </StudyTabs>
    <Status>
      <span>SOLIDWORKS Student Edition - Academic Use Only</span>
      <StatusCell $w={66}>Under Defined</StatusCell>
      <StatusCell $w={61} $dim><Component size={7} /></StatusCell>
      <StatusCell $w={36} $dim>MMGS</StatusCell>
      <StatusCell $w={14} $dim>-</StatusCell>
      <StatusCell $w={11}><Brush size={8} /></StatusCell>
    </Status>
    <Taskbar>
      {apps.map(a => <TaskButton key={a.name} aria-label={a.name} $open={a.open} $on={a.on}>{a.icon}</TaskButton>)}
      <Tray>
        <IconButton $w={15} $color="#ddd"><Chevron dir="up" /></IconButton>
        <IconButton $w={15}>
          <svg width="11" height="11" viewBox="0 0 22 22">
            <rect x="1" y="2" width="14" height="13" rx="3" fill="#d02c44" />
            <path d="M4 8 h8 M8 5 v7" stroke="#fff" strokeWidth="2" />
            <path d="M17 9 v7 M17 18 v2" stroke="#f4d44c" strokeWidth="3" />
          </svg>
        </IconButton>
        <IconButton $w={16} $color="#eee"><Mic size={10} fill="#eee" /></IconButton>
        <IconButton $w={15} $color="#eee"><BatteryMedium size={11} fill="#eee" /></IconButton>
        <IconButton $w={15} $color="#bbb"><Wifi size={10} /></IconButton>
        <IconButton $w={14} $color="#eee"><VolumeX size={10} /></IconButton>
        <IconButton $w={24} $color="#eee">ENG</IconButton>
        <Clock>14:40<br />01-08-2023</Clock>
        <NotifyButton $w={22}><NotifyGlyph /></NotifyButton>
      </Tray>
    </Taskbar>
    <Cursor width="9" height="14" viewBox="0 0 18 28">
      <path d="M1 1 V22 L6 18 L10 27 L14 25 L10 16 H17 Z" fill="#fff" stroke="#222" />
    </Cursor>
  </Page>
)

export default App
